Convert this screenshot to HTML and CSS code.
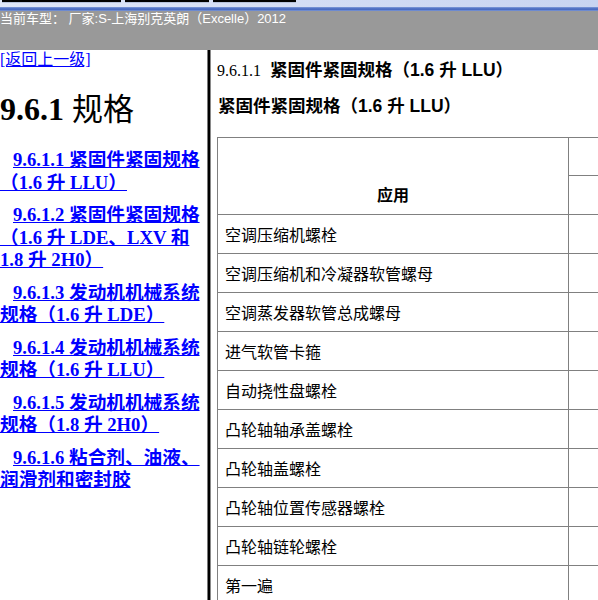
FILE: index.html
```html
<!DOCTYPE html>
<html lang="zh-CN">
<head>
<meta charset="utf-8">
<title>9.6.1 规格</title>
<link rel="stylesheet" href="styles.css">
</head>
<body>
<div class="topstrip">
  <span class="tb tb1"></span><span class="tb tb2"></span><span class="tb tb3"></span>
</div>
<div class="carbar">当前车型： 厂家:S-上海别克英朗（Excelle）2012</div>
<div class="frames">
  <nav class="left">
    <a class="back" href="#">[返回上一级]</a>
    <h1>9.6.1 <span class="cjk">规格</span></h1>
    <p class="item"><a href="#">9.6.1.1 紧固件紧固规格（1.6 升 LLU）</a></p>
    <p class="item"><a href="#">9.6.1.2 紧固件紧固规格（1.6 升 LDE、LXV 和 1.8 升 2H0）</a></p>
    <p class="item"><a href="#">9.6.1.3 发动机机械系统规格（1.6 升 LDE）</a></p>
    <p class="item"><a href="#">9.6.1.4 发动机机械系统规格（1.6 升 LLU）</a></p>
    <p class="item"><a href="#">9.6.1.5 发动机机械系统规格（1.8 升 2H0）</a></p>
    <p class="item"><a href="#">9.6.1.6 粘合剂、油液、润滑剂和密封胶</a></p>
  </nav>
  <div class="divider"></div>
  <main class="right">
    <p class="title"><span class="num">9.6.1.1</span><b class="bt">紧固件紧固规格（1.6 升 LLU）</b></p>
    <p class="subtitle">紧固件紧固规格（1.6 升 LLU）</p>
    <table class="spec">
      <tr class="hr1"><th rowspan="2" class="app">应用</th><td class="c2"></td><td class="c3"></td></tr>
      <tr class="hr2"><td></td><td></td></tr>
      <tr><td>空调压缩机螺栓</td><td></td><td></td></tr>
      <tr><td>空调压缩机和冷凝器软管螺母</td><td></td><td></td></tr>
      <tr><td>空调蒸发器软管总成螺母</td><td></td><td></td></tr>
      <tr><td>进气软管卡箍</td><td></td><td></td></tr>
      <tr><td>自动挠性盘螺栓</td><td></td><td></td></tr>
      <tr><td>凸轮轴轴承盖螺栓</td><td></td><td></td></tr>
      <tr><td>凸轮轴盖螺栓</td><td></td><td></td></tr>
      <tr><td>凸轮轴位置传感器螺栓</td><td></td><td></td></tr>
      <tr><td>凸轮轴链轮螺栓</td><td></td><td></td></tr>
      <tr><td>第一遍</td><td></td><td></td></tr>
    </table>
  </main>
</div>
</body>
</html>
```
FILE: styles.css
```css
html, body {
  margin: 0;
  padding: 0;
  background: #fff;
  overflow: hidden;
}
body {
  width: 598px;
  height: 600px;
  font-family: "Liberation Serif", "Noto Sans CJK SC", serif;
}
.topstrip {
  height: 11px;
  background:
    linear-gradient(to bottom, transparent 0, transparent 7px, #8ea6dd 7px, #5778c8 8px, #4868bd 10px, #6d8ad0 10px, #6d8ad0 11px),
    linear-gradient(to right, #dfe6f7, #c8d4f1);
  display: flex;
  gap: 4px;
  padding-left: 2px;
  box-sizing: border-box;
  align-items: flex-start;
}
.tb {
  display: block;
  height: 2px;
  background: #000;
  border-bottom: 1px solid #b8c3dc;
}
.tb1 { width: 119px; }
.tb2 { width: 84px; }
.tb3 { width: 83px; }
.carbar {
  height: 39px;
  background: #999999;
  color: #fff;
  font-family: "Liberation Sans", "Noto Sans CJK SC", sans-serif;
  font-size: 13px;
  line-height: 15px;
  padding-top: 0;
  box-sizing: border-box;
  white-space: nowrap;
}
.frames {
  display: flex;
  height: 550px;
  overflow: hidden;
}
.left {
  width: 207px;
  flex: 0 0 207px;
  overflow: hidden;
}
.back {
  display: block;
  color: #0000ff;
  font-size: 16px;
  line-height: 20px;
  height: 20px;
  text-decoration: underline;
  width: max-content;
}
.left h1 {
  margin: 21px 0 21px;
  font-size: 32px;
  line-height: 37px;
  font-weight: bold;
  color: #000;
  white-space: nowrap;
}
.left h1 .cjk {
  font-weight: normal;
  line-height: 32px;
  font-size: 31px;
}
.item {
  margin: 0 0 10px;
  font-size: 18.67px;
  line-height: 22.5px;
  font-weight: bold;
  text-indent: 13px;
}
.item a {
  color: #0000ff;
  text-decoration: underline;
}
.divider {
  flex: 0 0 4px;
  width: 4px;
  box-sizing: border-box;
  border-left: 1px solid #7a7a7a;
  border-right: 1px solid #8a8a8a;
  background: #000;
}
.right {
  flex: 1 1 auto;
  overflow: hidden;
  padding: 10px 0 0 6px;
  min-width: 0;
}
.title {
  margin: 0;
  height: 20px;
  line-height: 20px;
  white-space: nowrap;
  color: #000;
}
.num {
  font-family: "Liberation Serif", serif;
  font-size: 16px;
}
.bt, .subtitle {
  font-family: "Liberation Sans", "Noto Sans CJK SC", sans-serif;
  font-size: 17.5px;
  font-weight: bold;
}
.bt {
  margin-left: 9px;
}
.subtitle {
  margin: 16px 0 0 1px;
  line-height: 20px;
  height: 20px;
  white-space: nowrap;
  color: #000;
}
.spec {
  margin-top: 21px;
  border-collapse: collapse;
  border: 1px solid #808080;
  table-layout: fixed;
  width: 751px;
  font-family: "Noto Sans CJK SC", sans-serif;
  font-size: 16px;
}
.spec td, .spec th {
  border: 1px solid #808080;
  padding: 0 7px;
  height: 38px;
  line-height: 18px;
  text-align: left;
  vertical-align: middle;
  color: #000;
  font-weight: normal;
  white-space: nowrap;
}
.spec .hr1 td { height: 37px; }
.spec th.app {
  width: 335px;
  text-align: center;
  vertical-align: bottom;
  padding-bottom: 11px;
  font-weight: bold;
}
.spec .c2 { width: 184px; }
.spec .c3 { width: 184px; }
```
